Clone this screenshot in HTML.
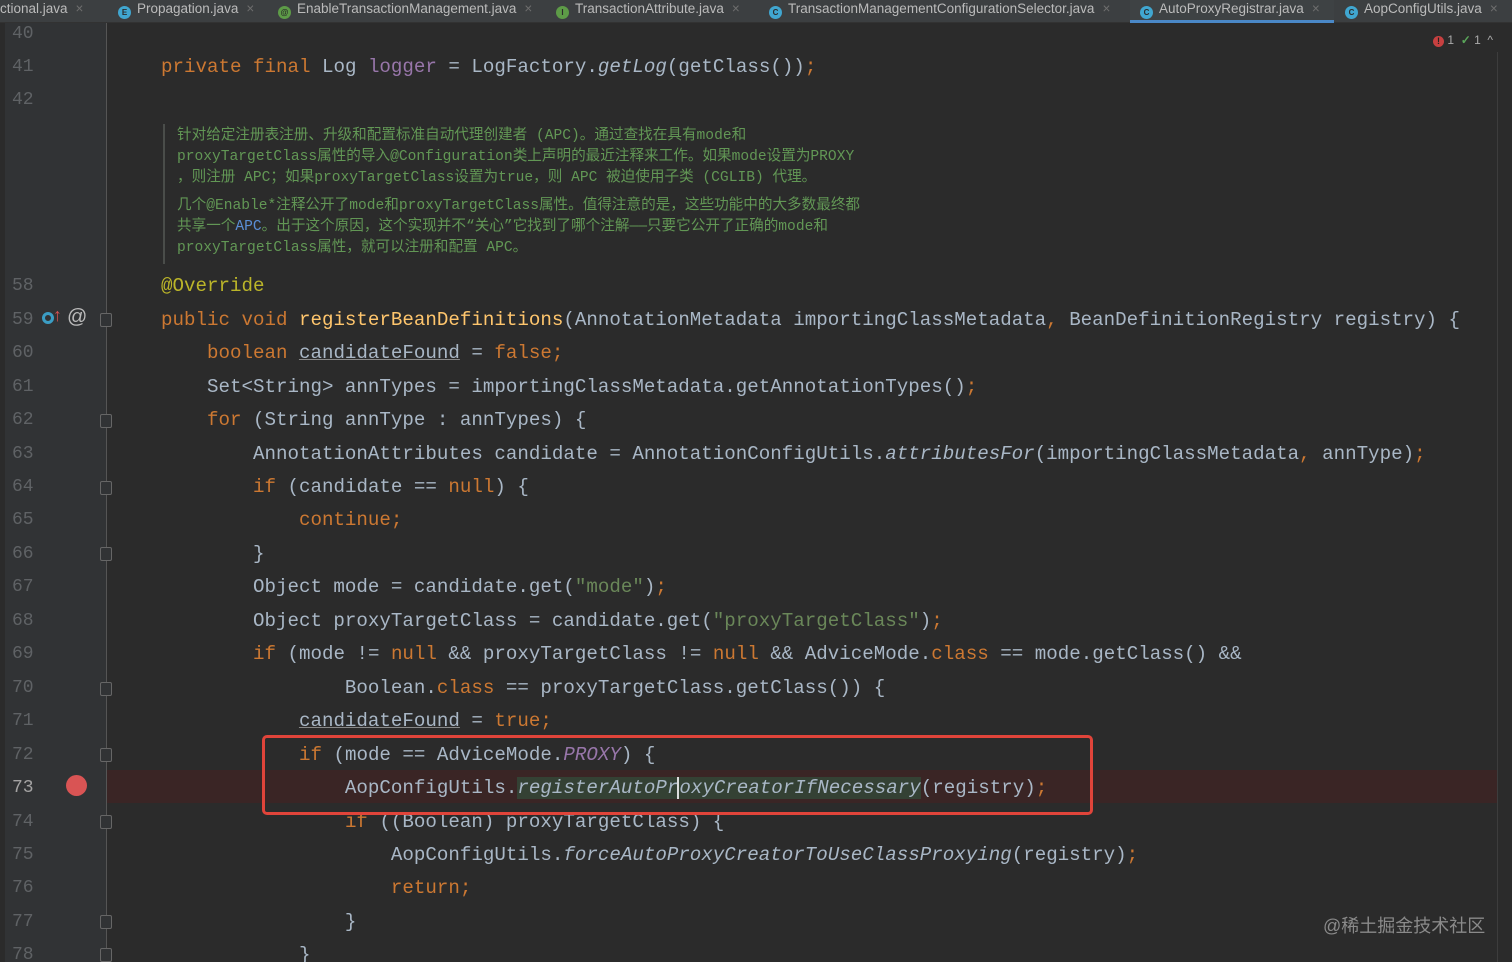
<!DOCTYPE html>
<html><head><meta charset="utf-8"><style>
*{margin:0;padding:0;box-sizing:border-box}
html,body{width:1512px;height:962px;overflow:hidden}
body{background:#2b2b2b;position:relative;font-family:"Liberation Mono","Noto Sans CJK SC",monospace}
#tabs{position:absolute;left:0;top:0;width:1512px;height:23px;background:#3c3f41;border-bottom:1px solid #323232;font-family:"Liberation Sans","Noto Sans CJK SC",sans-serif;font-size:13.5px;color:#bbbbbb;white-space:nowrap}
.tab{position:absolute;top:0;height:23px;line-height:17px}
.ic{display:inline-block;width:13px;height:13px;border-radius:50%;vertical-align:-2px;margin-right:6px;font-size:8px;line-height:13px;text-align:center;color:#2b2b2b;font-weight:bold}
.x{color:#6e6e6e;margin-left:8px}
#gutter{position:absolute;left:5px;top:23px;width:101px;height:939px;background:#313335}
#gline{position:absolute;left:106px;top:23px;width:1px;height:939px;background:#555}
.ln{position:absolute;left:12px;width:40px;font-size:18px;color:#5f6265;font-family:"Liberation Mono",monospace;height:33.45px;line-height:33.45px}
.c{position:absolute;left:161px;font-size:19.17px;color:#a9b7c6;white-space:pre;height:33.45px;line-height:33.45px}
.k{color:#cc7832}.m{color:#ffc66d}.a{color:#bbb529}.s{color:#6a8759}.f{color:#9876aa}.i{font-style:italic}.u{text-decoration:underline;text-decoration-color:#888}
.doc{position:absolute;left:163px;top:122px;height:140px;border-left:2px solid #4a4d4a;padding-left:12px;padding-top:2px;color:#629755;font-size:14.6px;line-height:21px;font-family:"Liberation Mono","Noto Sans CJK SC",monospace;white-space:pre}
.fold{position:absolute;left:100px;width:12px;height:14px;border:1px solid #666;border-radius:2px;background:#313335}
#w{position:absolute;left:0;top:2px;width:1512px;height:960px}
</style></head><body>
<div id="gutter"></div><div id="gline"></div>
<div style="position:absolute;left:1497px;top:52px;width:1px;height:910px;background:#3d3d3d"></div>
<div style="position:absolute;left:1433px;top:33px;font:12px 'Liberation Sans',sans-serif;color:#aaa"><span style="display:inline-block;width:11px;height:11px;border-radius:50%;background:#c74040;color:#222;text-align:center;font-size:9px;line-height:11px;font-weight:bold">!</span> 1 &nbsp;<span style="color:#5aa65a;font-weight:bold">✓</span> 1 &nbsp;^</div>
<div id="w">
<div style="position:absolute;left:107px;top:768px;width:1390px;height:33px;background:#3a2525"></div>
<div style="position:absolute;left:66px;top:773px;width:21px;height:21px;border-radius:50%;background:#d95454"></div>

<div class="ln" style="top:15.5px">40</div>
<div class="ln" style="top:48.5px">41</div>
<div class="ln" style="top:82px">42</div>
<div class="c" style="top:48.5px"><span class="k">private final </span>Log <span class="f">logger</span> = LogFactory.<span class="i">getLog</span>(getClass())<span class="k">;</span></div>
<div class="doc">针对给定注册表注册、升级和配置标准自动代理创建者 (APC)。通过查找在具有mode和
proxyTargetClass属性的导入@Configuration类上声明的最近注释来工作。如果mode设置为PROXY
，则注册 APC；如果proxyTargetClass设置为true，则 APC 被迫使用子类 (CGLIB) 代理。
<span style="display:block;height:7px"></span>几个@Enable*注释公开了mode和proxyTargetClass属性。值得注意的是，这些功能中的大多数最终都
共享一个<span style="color:#5a8ed6">APC</span>。出于这个原因，这个实现并不“关心”它找到了哪个注解——只要它公开了正确的mode和
proxyTargetClass属性，就可以注册和配置 APC。</div>

<div class="ln" style="top:268.3px">58</div>
<div class="ln" style="top:301.7px">59</div>
<div class="ln" style="top:335.2px">60</div>
<div class="ln" style="top:368.6px">61</div>
<div class="ln" style="top:402.1px">62</div>
<div class="ln" style="top:435.5px">63</div>
<div class="ln" style="top:469px">64</div>
<div class="ln" style="top:502.4px">65</div>
<div class="ln" style="top:535.9px">66</div>
<div class="ln" style="top:569.3px">67</div>
<div class="ln" style="top:602.8px">68</div>
<div class="ln" style="top:636.2px">69</div>
<div class="ln" style="top:669.7px">70</div>
<div class="ln" style="top:703.1px">71</div>
<div class="ln" style="top:736.6px">72</div>
<div class="ln" style="top:770px;color:#a4a3a3">73</div>
<div class="ln" style="top:803.5px">74</div>
<div class="ln" style="top:836.9px">75</div>
<div class="ln" style="top:870.4px">76</div>
<div class="ln" style="top:903.8px">77</div>
<div class="ln" style="top:937.3px">78</div>

<div style="position:absolute;left:42px;top:310px;width:12px;height:12px;border-radius:50%;border:3px solid #3b9dc4"></div>
<div style="position:absolute;left:52px;top:305px;color:#d45050;font-size:18px;line-height:20px">↑</div>
<div style="position:absolute;left:67px;top:304px;color:#bbb;font-size:20px;font-family:'Liberation Sans',sans-serif">@</div>

<div class="fold" style="top:311px"></div>
<div class="fold" style="top:412px"></div>
<div class="fold" style="top:479px"></div>
<div class="fold" style="top:545px"></div>
<div class="fold" style="top:680px"></div>
<div class="fold" style="top:746px"></div>
<div class="fold" style="top:813px"></div>
<div class="fold" style="top:913px"></div>
<div class="fold" style="top:946px"></div>

<div class="c" style="top:268.3px"><span class="a">@Override</span></div>
<div class="c" style="top:301.7px"><span class="k">public void </span><span class="m">registerBeanDefinitions</span>(AnnotationMetadata importingClassMetadata<span class="k">, </span>BeanDefinitionRegistry registry) {</div>
<div class="c" style="top:335.2px">    <span class="k">boolean </span><span class="u">candidateFound</span> = <span class="k">false;</span></div>
<div class="c" style="top:368.6px">    Set&lt;String&gt; annTypes = importingClassMetadata.getAnnotationTypes()<span class="k">;</span></div>
<div class="c" style="top:402.1px">    <span class="k">for </span>(String annType : annTypes) {</div>
<div class="c" style="top:435.5px">        AnnotationAttributes candidate = AnnotationConfigUtils.<span class="i">attributesFor</span>(importingClassMetadata<span class="k">, </span>annType)<span class="k">;</span></div>
<div class="c" style="top:469px">        <span class="k">if </span>(candidate == <span class="k">null</span>) {</div>
<div class="c" style="top:502.4px">            <span class="k">continue;</span></div>
<div class="c" style="top:535.9px">        }</div>
<div class="c" style="top:569.3px">        Object mode = candidate.get(<span class="s">"mode"</span>)<span class="k">;</span></div>
<div class="c" style="top:602.8px">        Object proxyTargetClass = candidate.get(<span class="s">"proxyTargetClass"</span>)<span class="k">;</span></div>
<div class="c" style="top:636.2px">        <span class="k">if </span>(mode != <span class="k">null </span>&amp;&amp; proxyTargetClass != <span class="k">null </span>&amp;&amp; AdviceMode.<span class="k">class </span>== mode.getClass() &amp;&amp;</div>
<div class="c" style="top:669.7px">                Boolean.<span class="k">class </span>== proxyTargetClass.getClass()) {</div>
<div class="c" style="top:703.1px">            <span class="u">candidateFound</span> = <span class="k">true;</span></div>
<div class="c" style="top:736.6px">            <span class="k">if </span>(mode == AdviceMode.<span class="f i">PROXY</span>) {</div>
<div class="c" style="top:770px">                AopConfigUtils.<span class="i" style="background:#344134">registerAutoPr<span style="border-left:2px solid #ddd;margin-left:-1px"></span>oxyCreatorIfNecessary</span>(registry)<span class="k">;</span></div>
<div class="c" style="top:803.5px">                <span class="k">if </span>((Boolean) proxyTargetClass) {</div>
<div class="c" style="top:836.9px">                    AopConfigUtils.<span class="i">forceAutoProxyCreatorToUseClassProxying</span>(registry)<span class="k">;</span></div>
<div class="c" style="top:870.4px">                    <span class="k">return;</span></div>
<div class="c" style="top:903.8px">                }</div>
<div class="c" style="top:937.3px">            }</div>

<div style="position:absolute;left:262px;top:733px;width:831px;height:80px;border:3px solid #e0443a;border-radius:5px"></div>
<div style="position:absolute;left:1323px;top:910px;font:18px 'Liberation Sans','Noto Sans CJK SC',sans-serif;color:#8a8a8a">@稀土掘金技术社区</div>
</div>
<div id="tabs">
<div class="tab" style="left:0">ctional.java<span class="x">×</span></div>
<div class="tab" style="left:118px"><span class="ic" style="background:#40a6d0">E</span>Propagation.java<span class="x">×</span></div>
<div class="tab" style="left:278px"><span class="ic" style="background:#5d9b47">@</span>EnableTransactionManagement.java<span class="x">×</span></div>
<div class="tab" style="left:556px"><span class="ic" style="background:#5d9b47">I</span>TransactionAttribute.java<span class="x">×</span></div>
<div class="tab" style="left:769px"><span class="ic" style="background:#40a6d0">C</span>TransactionManagementConfigurationSelector.java<span class="x">×</span></div>
<div class="tab" style="left:1130px;width:204px;border-bottom:3px solid #4a88c7;padding-left:10px;background:#3e4244"><span class="ic" style="background:#40a6d0">C</span>AutoProxyRegistrar.java<span class="x">×</span></div>
<div class="tab" style="left:1345px"><span class="ic" style="background:#40a6d0">C</span>AopConfigUtils.java<span class="x">×</span></div>
</div>
</body></html>
